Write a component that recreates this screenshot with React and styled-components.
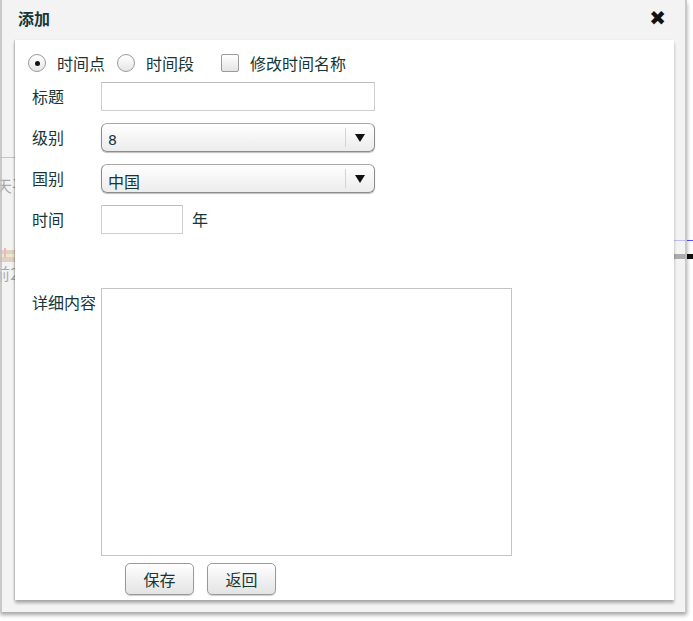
import React from 'react';
import styled, { createGlobalStyle } from 'styled-components';

const GlobalStyle = createGlobalStyle`
  html, body {
    margin: 0;
    padding: 0;
    background: #ffffff;
  }
  body {
    font-family: "Noto Sans CJK SC", "Noto Sans", sans-serif;
  }
`;

const Page = styled.div`
  position: relative;
  width: 693px;
  height: 621px;
  overflow: hidden;
  background: #fff;
`;

// bits of the timeline behind the dialog
const Mark = styled.div`
  position: absolute;
  left: ${p => p.x}px;
  top: ${p => p.y}px;
  width: ${p => p.w}px;
  height: ${p => p.h}px;
  background: ${p => p.bg};
`;

const BgText = styled.span`
  position: absolute;
  left: ${p => p.x}px;
  top: ${p => p.y}px;
  font-size: 16px;
  line-height: 20px;
  color: #000;
  white-space: nowrap;
`;

const Dialog = styled.div`
  position: absolute;
  left: 0;
  top: 0;
  width: 687px;
  height: 612px;
  background: rgba(238, 238, 238, 0.7);
  border-left: 2px solid rgba(190, 190, 190, 0.8);
  border-right: 2px solid rgba(190, 190, 190, 0.8);
  box-sizing: border-box;
  box-shadow: 0 3px 4px rgba(0, 0, 0, 0.35);
  display: flex;
  flex-direction: column;
`;

const Header = styled.div`
  height: 40px;
  display: flex;
  align-items: center;
  justify-content: space-between;
  padding: 0 19px 4px 16px;
  box-sizing: border-box;
`;

const Title = styled.span`
  font-size: 16px;
  font-weight: bold;
  color: #173636;
`;

const Close = styled.span`
  font-family: "DejaVu Sans", sans-serif;
  font-size: 20px;
  font-weight: bold;
  color: #111;
  line-height: 1;
`;

const Panel = styled.div`
  margin: 0 11px 0 13px;
  height: 560px;
  background: #fff;
  box-shadow: 0 3px 3px rgba(0, 0, 0, 0.3), -1px 0 1px rgba(0, 0, 0, 0.12);
  padding: 13px 0 0 17px;
  box-sizing: border-box;
  color: #173636;
  font-size: 16px;
`;

const TypeRow = styled.div`
  display: flex;
  align-items: center;
  height: 20px;
  margin-left: -4px;
  margin-bottom: 9px;
`;

const Choice = styled.label`
  display: flex;
  align-items: center;
  gap: 11px;
  margin-right: ${p => p.gap}px;
  line-height: 20px;
`;

const Radio = styled.span`
  width: 18px;
  height: 18px;
  border-radius: 50%;
  border: 1px solid #9a9a9a;
  box-sizing: border-box;
  background: linear-gradient(#ffffff, #e6e6e6);
  display: flex;
  align-items: center;
  justify-content: center;
  &::after {
    content: '';
    width: 5px;
    height: 5px;
    border-radius: 50%;
    background: ${p => (p.checked ? '#111' : 'transparent')};
  }
`;

const Check = styled.span`
  width: 18px;
  height: 18px;
  border: 1px solid #9a9a9a;
  box-sizing: border-box;
  border-radius: 2px;
  background: linear-gradient(#ffffff, #e4e4e4);
`;

const Row = styled.div`
  display: grid;
  grid-template-columns: 69px auto 1fr;
  align-items: start;
  margin-bottom: ${p => p.mb}px;
`;

const Label = styled.span`
  padding-top: 4px;
  line-height: 20px;
  white-space: nowrap;
`;

const TextInput = styled.div`
  width: ${p => p.w}px;
  height: 29px;
  border: 1px solid #cfcfcf;
  border-top-color: #bdbdbd;
  box-sizing: border-box;
  background: #fff;
`;

const Select = styled.div`
  width: 274px;
  height: 29px;
  border: 1px solid #8c8c8c;
  border-top-color: #a8a8a8;
  border-radius: 6px;
  box-sizing: border-box;
  background: linear-gradient(#ffffff, #ececec);
  display: flex;
  align-items: center;
  box-shadow: 0 1px 1px rgba(0, 0, 0, 0.25);
`;

const SelectValue = styled.span`
  flex: 1;
  padding: 4px 0 0 6px;
  font-family: ${p => (p.num ? '"DejaVu Sans", sans-serif' : 'inherit')};
  font-size: ${p => (p.num ? 14 : 16)}px;
  line-height: 20px;
`;

const Arrow = styled.span`
  width: 28px;
  height: 19px;
  border-left: 1px solid #d4d4d4;
  display: flex;
  align-items: center;
  justify-content: center;
  &::after {
    content: '';
    border-left: 5px solid transparent;
    border-right: 5px solid transparent;
    border-top: 8px solid #111;
  }
`;

const Unit = styled.span`
  padding: 4px 0 0 9px;
  line-height: 20px;
`;

const TextArea = styled.div`
  width: 411px;
  height: 268px;
  border: 1px solid #c4c4c4;
  box-sizing: border-box;
`;

const Buttons = styled.div`
  display: flex;
  gap: 13px;
  margin-left: 93px;
`;

const Button = styled.button`
  width: 69px;
  height: 32px;
  border: 1px solid #9a9a9a;
  border-radius: 5px;
  background: linear-gradient(#ffffff, #e3e3e3);
  font-family: inherit;
  font-size: 16px;
  color: #173636;
  padding: 0;
  box-shadow: 0 1px 1px rgba(0, 0, 0, 0.2);
`;

export default function App() {
  return (
    <Page>
      <GlobalStyle />
      <Mark x={0} y={157} w={20} h={1} bg="#5050ff" />
      <BgText x={-4} y={175}>天平</BgText>
      <Mark x={0} y={250} w={20} h={12} bg="#c09050" />
      <Mark x={0} y={254} w={20} h={3} bg="#e8d890" />
      <Mark x={4} y={248} w={2} h={10} bg="#ff3050" />
      <BgText x={-6} y={263}>前2</BgText>
      <Mark x={672} y={240} w={21} h={1} bg="#5050ff" />
      <Mark x={672} y={254} w={21} h={5} bg="#111" />
      <Dialog>
        <Header>
          <Title>添加</Title>
          <Close>✖</Close>
        </Header>
        <Panel>
          <TypeRow>
            <Choice gap={12}>
              <Radio checked />
              时间点
            </Choice>
            <Choice gap={27}>
              <Radio />
              时间段
            </Choice>
            <Choice gap={0}>
              <Check />
              修改时间名称
            </Choice>
          </TypeRow>
          <Row mb={12}>
            <Label>标题</Label>
            <TextInput w={274} />
          </Row>
          <Row mb={12}>
            <Label>级别</Label>
            <Select>
              <SelectValue num>8</SelectValue>
              <Arrow />
            </Select>
          </Row>
          <Row mb={12}>
            <Label>国别</Label>
            <Select>
              <SelectValue>中国</SelectValue>
              <Arrow />
            </Select>
          </Row>
          <Row mb={54}>
            <Label>时间</Label>
            <TextInput w={82} />
            <Unit>年</Unit>
          </Row>
          <Row mb={7}>
            <Label>详细内容</Label>
            <TextArea />
          </Row>
          <Buttons>
            <Button>保存</Button>
            <Button>返回</Button>
          </Buttons>
        </Panel>
      </Dialog>
    </Page>
  );
}
